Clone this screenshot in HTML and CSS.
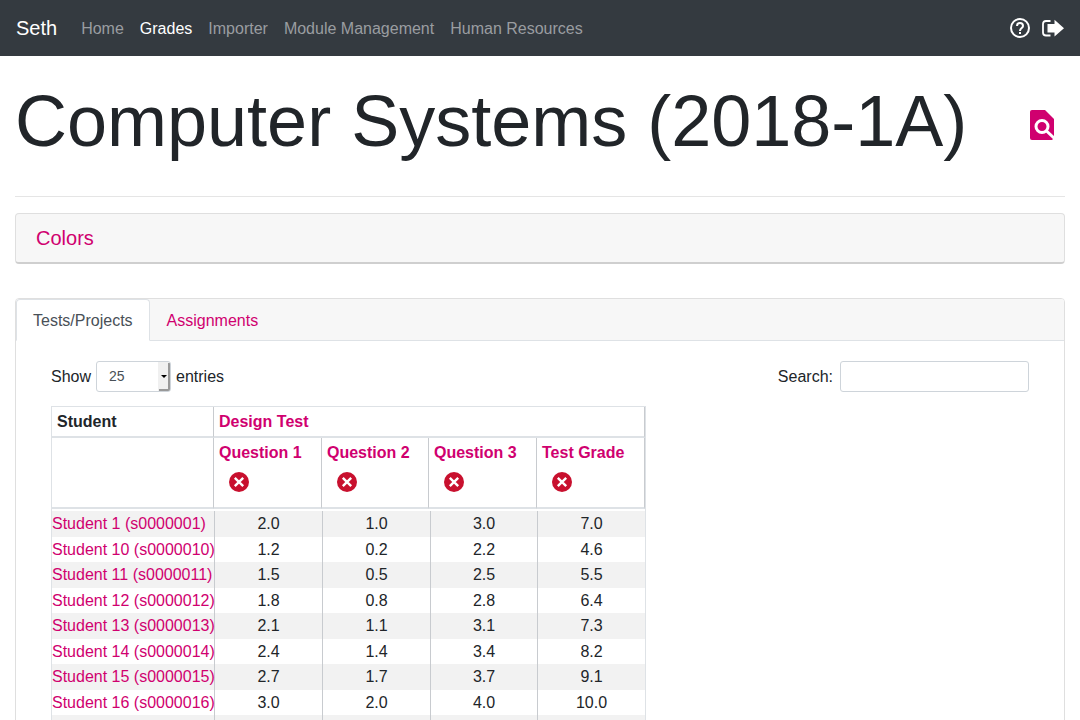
FILE: index.html
```html
<!DOCTYPE html>
<html lang="en">
<head>
<meta charset="utf-8">
<title>Seth</title>
<link rel="stylesheet" href="styles.css">
</head>
<body>
<svg class="sprite" aria-hidden="true">
  <symbol id="remove" viewBox="0 0 20 20"><circle cx="10" cy="10" r="10" fill="#c8102e"/><path d="M5.800 5.800l8.400 8.400M14.200 5.800l-8.400 8.400" stroke="#fff" stroke-width="2.400"/></symbol>
</svg>
<nav class="navbar">
  <a class="brand" href="#">Seth</a>
  <a class="nav-item" href="#">Home</a>
  <a class="nav-item current" href="#">Grades</a>
  <a class="nav-item" href="#">Importer</a>
  <a class="nav-item" href="#">Module Management</a>
  <a class="nav-item" href="#">Human Resources</a>
  <div class="nav-tools">
    <a href="#" aria-label="Help"><svg width="20" height="20" viewBox="0 0 20 20" fill="none" stroke="#fff" stroke-width="2"><circle cx="10" cy="10" r="9"/><path d="M7 8a3 3 0 1 1 6 0c0 2-3 2.200-3 5"/><path d="M10 14v2"/></svg></a>
    <a href="#" aria-label="Log out"><svg width="22" height="18" viewBox="0 0 22 18"><path d="M8.500 2H4Q1 2 1 5V13.500Q1 16.500 4 16.500H8.500" fill="none" stroke="#fff" stroke-width="1.800"/><path d="M5.500 5h7V.800L22 9.300L12.500 17.500v-4h-7z" fill="#fff"/></svg></a>
  </div>
</nav>
<main class="page">
  <header class="title-row">
    <h1>Computer Systems (2018-1A)</h1>
    <a class="title-action" href="#" aria-label="View details"><svg width="24" height="30" viewBox="0 0 24 30"><path d="M2 0H15L24 9V28L22 30H2Q0 30 0 28V2Q0 0 2 0Z" fill="#d0006f"/><circle cx="12" cy="16.500" r="6" fill="none" stroke="#fff" stroke-width="3"/><path d="M16 20.500L24.500 28.500" stroke="#fff" stroke-width="3"/></svg></a>
  </header>
  <section class="card colors"><a href="#">Colors</a></section>
  <section class="card">
    <div class="tabs">
      <a class="tab active" href="#">Tests/Projects</a>
      <a class="tab" href="#">Assignments</a>
    </div>
    <div class="panel">
      <div class="controls">
        <label>Show <select><option>25</option></select> entries</label>
        <label>Search: <input type="search"></label>
      </div>
      <div class="grid">
        <table class="head">
          <colgroup><col class="w162"><col class="w108"><col class="w107"><col class="w108"><col class="w108"></colgroup>
          <thead>
            <tr><th>Student</th><th colspan="4"><a href="#">Design Test</a></th></tr>
            <tr class="questions">
              <th></th>
              <th><a href="#">Question 1</a><button aria-label="Remove Question 1"><svg><use href="#remove"/></svg></button></th>
              <th><a href="#">Question 2</a><button aria-label="Remove Question 2"><svg><use href="#remove"/></svg></button></th>
              <th><a href="#">Question 3</a><button aria-label="Remove Question 3"><svg><use href="#remove"/></svg></button></th>
              <th><a href="#">Test Grade</a><button aria-label="Remove Test Grade"><svg><use href="#remove"/></svg></button></th>
            </tr>
          </thead>
        </table>
        <table class="rows">
          <colgroup><col class="w163"><col class="w108"><col class="w108"><col class="w107"><col class="w107"></colgroup>
          <tbody>
            <tr><td><a href="#">Student 1 (s0000001)</a></td><td>2.0</td><td>1.0</td><td>3.0</td><td>7.0</td></tr>
            <tr><td><a href="#">Student 10 (s0000010)</a></td><td>1.2</td><td>0.2</td><td>2.2</td><td>4.6</td></tr>
            <tr><td><a href="#">Student 11 (s0000011)</a></td><td>1.5</td><td>0.5</td><td>2.5</td><td>5.5</td></tr>
            <tr><td><a href="#">Student 12 (s0000012)</a></td><td>1.8</td><td>0.8</td><td>2.8</td><td>6.4</td></tr>
            <tr><td><a href="#">Student 13 (s0000013)</a></td><td>2.1</td><td>1.1</td><td>3.1</td><td>7.3</td></tr>
            <tr><td><a href="#">Student 14 (s0000014)</a></td><td>2.4</td><td>1.4</td><td>3.4</td><td>8.2</td></tr>
            <tr><td><a href="#">Student 15 (s0000015)</a></td><td>2.7</td><td>1.7</td><td>3.7</td><td>9.1</td></tr>
            <tr><td><a href="#">Student 16 (s0000016)</a></td><td>3.0</td><td>2.0</td><td>4.0</td><td>10.0</td></tr>
            <tr><td></td><td></td><td></td><td></td><td></td></tr>
          </tbody>
        </table>
      </div>
    </div>
  </section>
</main>
</body>
</html>
```
FILE: styles.css
```css
* { box-sizing: border-box; }
body {
  margin: 0;
  height: 100vh;
  overflow: hidden;
  background: #fff;
  color: #212529;
  font: 16px/24px "Liberation Sans", Arial, sans-serif;
}
a { color: #d0006f; text-decoration: none; }
svg { display: block; }
.sprite { position: absolute; width: 0; height: 0; }

.navbar {
  display: flex;
  align-items: center;
  gap: 16px;
  height: 56px;
  padding: 0 16px;
  background: #343a40;
}
.brand { margin-right: 8px; color: #fff; font-size: 20px; }
.nav-item { padding-top: 2px; color: #9a9da0; }
.nav-item.current { color: #fff; }
.nav-tools { display: flex; align-items: center; gap: 12px; margin-left: auto; }

.page { padding: 0 15px; }
.title-row {
  display: flex;
  align-items: center;
  justify-content: space-between;
  height: 141px;
  margin-bottom: 16px;
  padding: 0 11px 3px 0;
  border-bottom: 1px solid #e5e5e5;
}
h1 { margin: 0 0 8px; font-size: 72px; line-height: 86px; font-weight: 400; white-space: nowrap; }

.card { border: 1px solid #dfdfdf; border-radius: 4px; }
.colors {
  margin-bottom: 34px;
  padding: 12px 20px 11px;
  background: #f7f7f7;
  border-bottom: 2px solid #cfcfcf;
  font-size: 20px;
}
.colors a { display: block; line-height: 25px; }

.tabs {
  display: flex;
  height: 42px;
  background: #f7f7f7;
  border-bottom: 1px solid #dee2e6;
  border-radius: 3px 3px 0 0;
}
.tab { height: 42px; padding: 9px 16px 7px; border: 1px solid transparent; border-radius: 4px 4px 0 0; }
.tab.active { color: #495057; background: #fff; border-color: #dee2e6; border-bottom-color: #fff; }

.panel { padding: 20px 35px; }
.controls { display: flex; justify-content: space-between; margin-bottom: 14px; }
.controls label { display: flex; align-items: center; gap: 5px; }
.controls select, .controls input {
  height: 31px;
  border: 1px solid #ced4da;
  border-radius: 3px;
  background: #fff;
  color: #495057;
  font: 14px/21px "Liberation Sans", Arial, sans-serif;
}
.controls select {
  appearance: none;
  width: 75px;
  padding: 0 12px;
  background: #fff url("data:image/svg+xml,%3Csvg xmlns='http://www.w3.org/2000/svg' width='12' height='29'%3E%3Cpath fill='%23f0f0f0' d='M0 0h12v29H0z'/%3E%3Cpath fill='%23999' d='M10 1h2v28H1v-2h9z'/%3E%3Cpath d='M3 13h6l-3 3z'/%3E%3C/svg%3E") right center no-repeat;
}
.controls input { width: 189px; margin-left: 2px; padding: 4px 8px; }

.grid { width: 595px; border: 1px solid #dee2e6; border-bottom: 0; }
table { width: 593px; table-layout: fixed; border-collapse: separate; border-spacing: 0; }
.w107 { width: 107px; }
.w108 { width: 108px; }
.w162 { width: 162px; }
.w163 { width: 163px; }
th {
  height: 31px;
  padding: 3px 5px 2px;
  border-right: 1px solid #c8cbcf;
  border-bottom: 2px solid #dee2e6;
  text-align: left;
  vertical-align: top;
  white-space: nowrap;
}
.questions th { height: 71px; }
th button { display: block; margin: 7px 0 0 10px; padding: 0; border: 0; background: none; }
th button svg { width: 20px; height: 20px; }
.rows { margin-top: 2px; }
td {
  height: 25px;
  padding: 0;
  border-right: 1px solid #c8cbcf;
  text-align: center;
  white-space: nowrap;
}
td:first-child { text-align: left; }
td:last-child { border-right: 0; }
.rows tr:nth-child(odd) td { height: 26px; background: #f2f2f2; }
```
